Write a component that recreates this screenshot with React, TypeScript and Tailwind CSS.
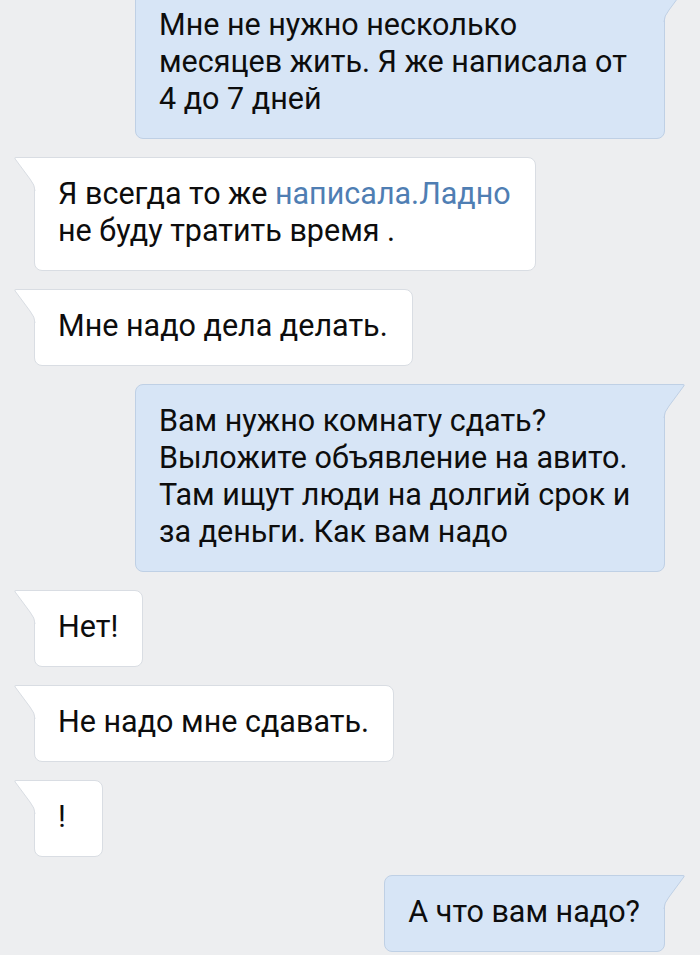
import type { ReactNode } from "react";

type Msg = { out: boolean; lines: ReactNode[] };

const messages: Msg[] = [
  {
    out: true,
    lines: ["Мне не нужно несколько", "месяцев жить. Я же написала от", "4 до 7 дней"],
  },
  {
    out: false,
    lines: [
      <>
        Я всегда то же <span className="text-[#4f7eb3]">написала.Ладно</span>
      </>,
      "не буду тратить время .",
    ],
  },
  { out: false, lines: ["Мне надо дела делать."] },
  {
    out: true,
    lines: [
      "Вам нужно комнату сдать?",
      "Выложите объявление на авито.",
      "Там ищут люди на долгий срок и",
      "за деньги. Как вам надо",
    ],
  },
  { out: false, lines: ["Нет!"] },
  { out: false, lines: ["Не надо мне сдавать."] },
  { out: false, lines: ["!"] },
  { out: true, lines: ["А что вам надо?"] },
];

function Tail({ out }: { out: boolean }) {
  const fill = out ? "#d7e5f6" : "#ffffff";
  const stroke = out ? "#bfd0e5" : "#d9dde3";
  return (
    <svg
      width="22"
      height="34"
      viewBox="0 0 22 34"
      className={`absolute top-[-1px] ${out ? "right-[-21px] -scale-x-100" : "left-[-21px]"}`}
    >
      <path d="M22 0.5 L2 0.5 Q0 0.5 1.2 2 L16 22 Q21 28 21 34 L22 34 Z" fill={fill} />
      <path d="M22 0.5 L2 0.5 Q0 0.5 1.2 2 L16 22 Q21 28 21 34" fill="none" stroke={stroke} strokeWidth="1" />
    </svg>
  );
}

function Bubble({ msg }: { msg: Msg }) {
  return (
    <div className={`flex ${msg.out ? "justify-end pr-[35px]" : "justify-start pl-[34px]"}`}>
      <div
        className={`relative min-w-[69px] pl-[23px] pr-[24px] pt-[17px] pb-[21px] text-[30.5px] leading-[37px] text-[#0d0d0d] whitespace-nowrap border ${
          msg.out
            ? "bg-[#d7e5f6] border-[#bfd0e5] rounded-[8px] rounded-tr-none"
            : "bg-white border-[#d9dde3] rounded-[8px] rounded-tl-none"
        } ${msg.out && msg.lines.length > 1 ? "w-[530px]" : ""}`}
      >
        <Tail out={msg.out} />
        {msg.lines.map((l, i) => (
          <div key={i}>{l}</div>
        ))}
      </div>
    </div>
  );
}

export default function App() {
  return (
    <div
      className="h-[955px] w-[700px] overflow-hidden bg-[#edeef0]"
      style={{ fontFamily: "Roboto, 'Noto Sans', sans-serif" }}
    >
      <div className="mt-[-12px] flex flex-col gap-[18px]">
        {messages.map((m, i) => (
          <Bubble key={i} msg={m} />
        ))}
      </div>
    </div>
  );
}
